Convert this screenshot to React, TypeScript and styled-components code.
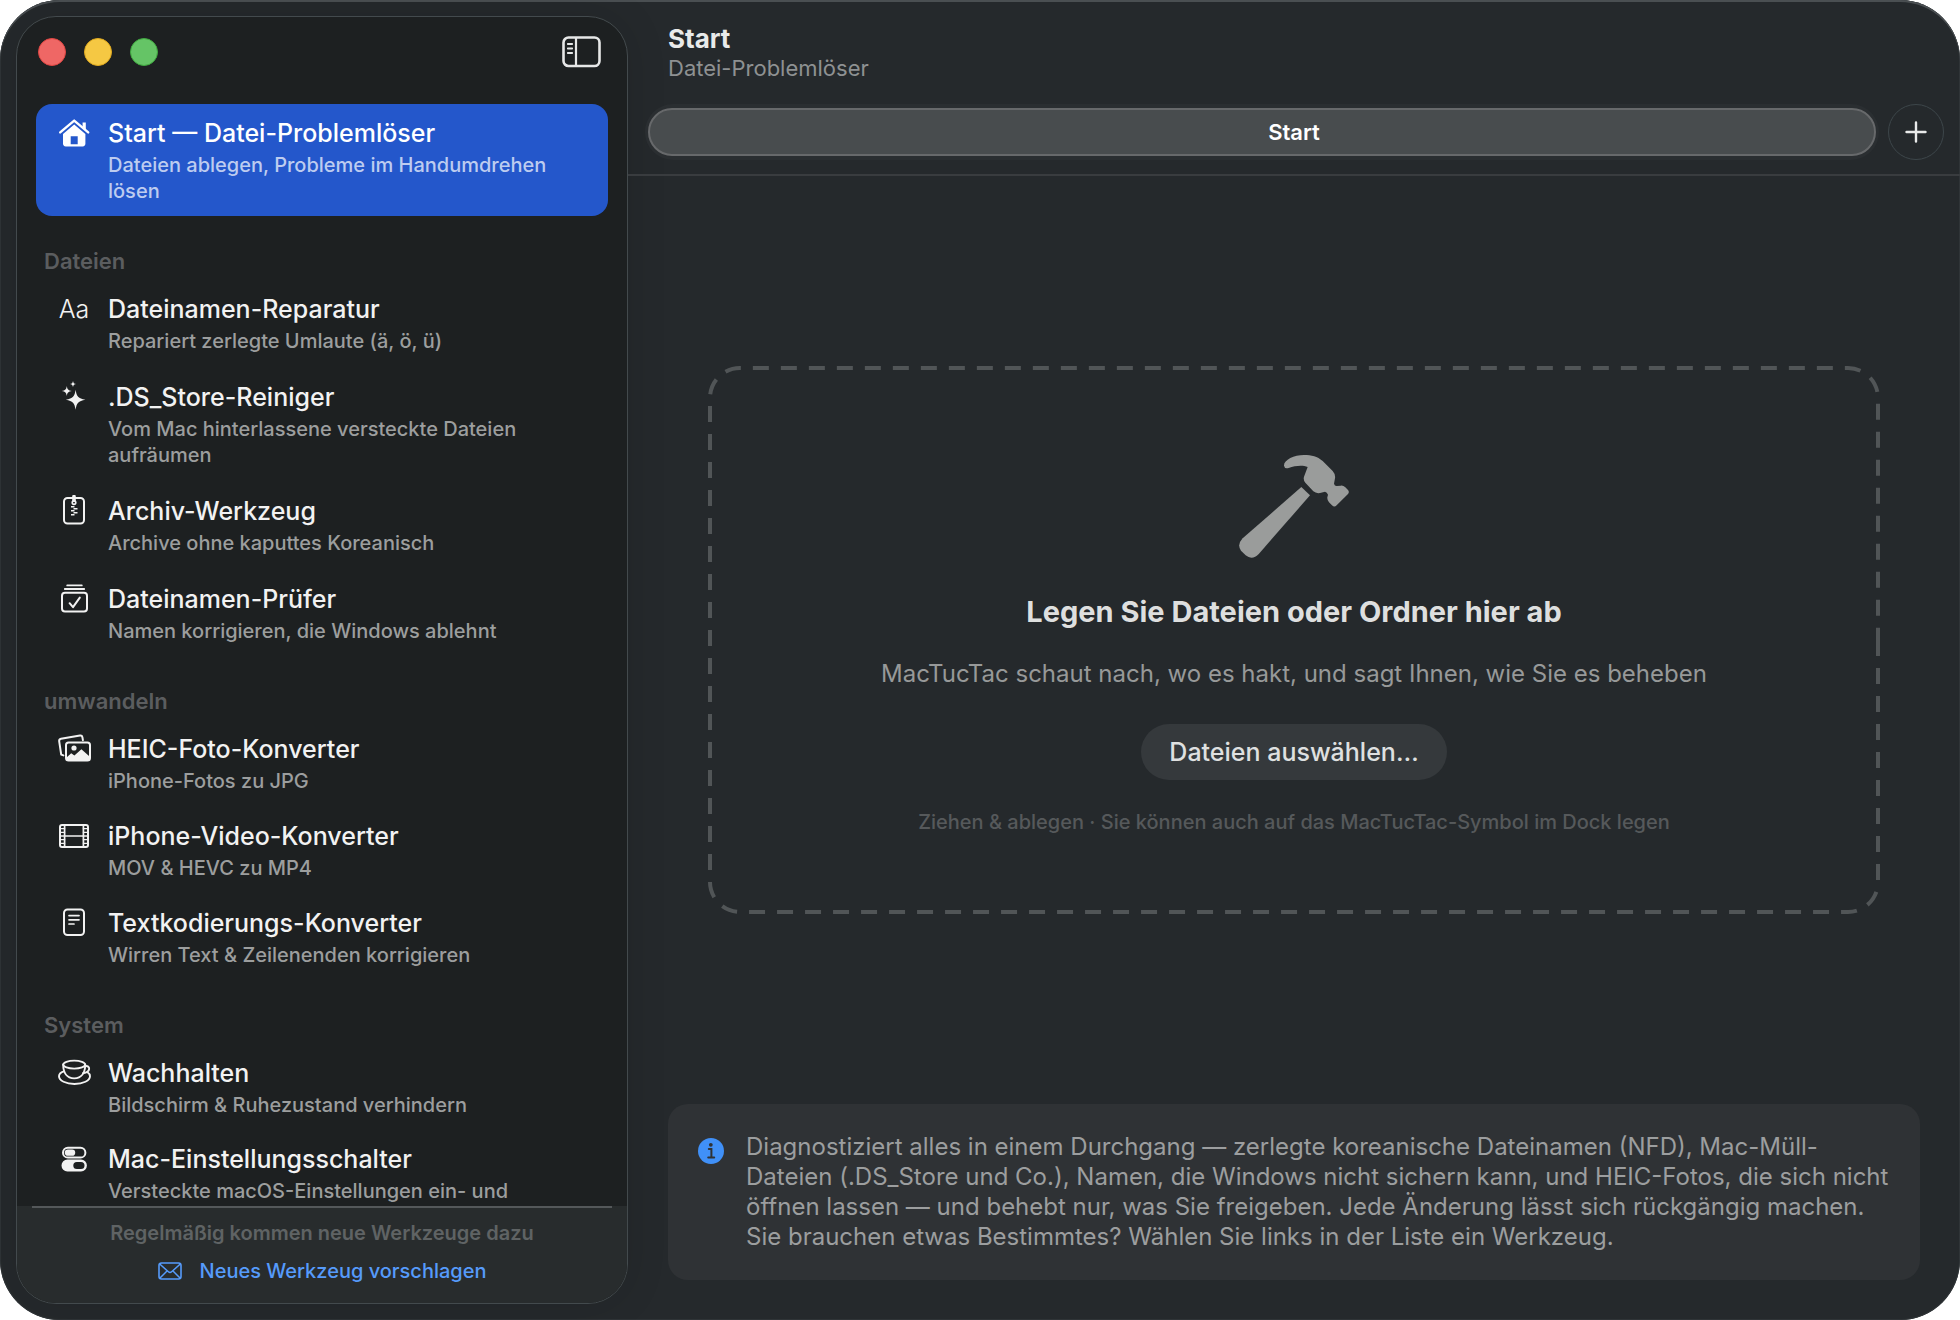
import React, { useLayoutEffect, useRef, useState } from "react";
import styled, { createGlobalStyle } from "styled-components";

const GlobalStyle = createGlobalStyle`
  *, *::before, *::after { box-sizing: border-box; }
  body {
    margin: 0;
    background: #ffffff;
    font-family: Inter, "Liberation Sans", sans-serif;
    -webkit-font-smoothing: antialiased;
  }
  button { font: inherit; color: inherit; background: none; border: 0; padding: 0; cursor: default; }
  h1, h2, p, ul { margin: 0; padding: 0; }
`;

const Window = styled.div`
  display: flex;
  height: 100vh;
  padding: 16px 0 16px 16px;
  border-radius: 60px;
  background: #25292c;
  box-shadow: inset 0 2px 0 #4a4f52, inset 0 0 0 1px #2f3437;
  overflow: hidden;
`;

const Sidebar = styled.aside`
  flex: 0 0 612px;
  display: flex;
  flex-direction: column;
  border: 1px solid #434a4d;
  border-radius: 40px;
  background: #1d2021;
  box-shadow: 0 0 40px rgba(0, 0, 0, 0.12);
  overflow: hidden;
`;

const SidebarTop = styled.div`
  flex: none;
  display: flex;
  align-items: center;
  height: 87px;
  padding: 0 25px 17px 21px;
`;

const Lights = styled.div`
  display: flex;
  gap: 18px;
  flex: 1;
`;

const Light = styled.button<{ $fill: string; $edge: string }>`
  width: 28px;
  height: 28px;
  border-radius: 50%;
  background: ${(p) => p.$fill};
  border: 1px solid ${(p) => p.$edge};
`;

const IconButton = styled.button`
  display: grid;
  place-items: center;
`;

const Nav = styled.nav`
  flex: 1;
  min-height: 0;
  overflow-y: auto;
  scrollbar-width: none;
  padding: 0 19px;
`;

const SectionTitle = styled.h2`
  padding: 31px 8px 5px;
  font-size: 22px;
  line-height: 28px;
  font-weight: 600;
  color: #5b5d5f;
`;

const List = styled.ul<{ $gap: number }>`
  display: flex;
  flex-direction: column;
  gap: ${(p) => p.$gap}px;
  list-style: none;
`;

const Row = styled.button<{ $active: boolean }>`
  display: grid;
  grid-template-columns: 40px 1fr;
  gap: 3px 14px;
  align-items: center;
  width: 100%;
  padding: 13px 18px 12px;
  border-radius: 16px;
  text-align: left;
  color: ${(p) => (p.$active ? "#ffffff" : "#f2f2f2")};
  background: ${(p) => (p.$active ? "#2457cb" : "transparent")};
`;

const IconCell = styled.span`
  display: grid;
  place-items: center;
  height: 32px;
  font-size: 25px;
  line-height: 32px;
  font-weight: 300;
`;

const RowTitle = styled.span`
  font-size: 25px;
  line-height: 32px;
  font-weight: 500;
`;

const RowText = styled.span<{ $active: boolean }>`
  grid-column: 2;
  font-size: 20px;
  line-height: 26px;
  font-weight: 500;
  color: ${(p) => (p.$active ? "#bdccf0" : "#9c9e9e")};
`;

const SidebarFoot = styled.footer`
  flex: none;
  display: flex;
  flex-direction: column;
  align-items: center;
  height: 97px;
  padding: 0 15px;
  background: #282c2d;
`;

const Rule = styled.hr`
  align-self: stretch;
  height: 2px;
  margin: 0 0 11px;
  border: 0;
  background: #54585a;
`;

const FootNote = styled.p`
  font-size: 20px;
  line-height: 28px;
  font-weight: 600;
  color: #5f6364;
`;

const FootLink = styled.a`
  display: flex;
  align-items: center;
  gap: 18px;
  margin-top: 10px;
  font-size: 20px;
  line-height: 28px;
  font-weight: 500;
  color: #569bfb;
  text-decoration: none;
`;

const Main = styled.main`
  flex: 1;
  min-width: 0;
  display: flex;
  flex-direction: column;
`;

const TitleBar = styled.header`
  padding: 7px 40px 22px;
`;

const Title = styled.h1`
  font-size: 26px;
  line-height: 32px;
  font-weight: 700;
  color: #e9eaea;
`;

const Subtitle = styled.p`
  font-size: 22px;
  line-height: 26px;
  color: #8e9192;
`;

const TabStrip = styled.div`
  display: flex;
  gap: 9px;
  padding: 1px 16px 14px;
  border-bottom: 2px solid #393c3f;
`;

const TabTrack = styled.div`
  flex: 1;
  display: flex;
  margin-left: 1px;
  padding: 4px 3px;
  border-radius: 28px;
  background: #2a2e31;
`;

const Tab = styled.button`
  flex: 1;
  height: 48px;
  padding-left: 64px;
  border: 2px solid #67696b;
  border-radius: 24px;
  background: #484c4e;
  font-size: 22px;
  line-height: 28px;
  font-weight: 600;
  color: #ffffff;
`;

const AddTab = styled.button`
  display: grid;
  place-items: center;
  width: 56px;
  height: 56px;
  border: 1px solid #3d464a;
  border-radius: 50%;
`;

const Stage = styled.section`
  flex: 1;
  display: flex;
  align-items: center;
  padding: 0 80px;
`;

const DropZone = styled.div`
  position: relative;
  flex: 1;
  display: flex;
  flex-direction: column;
  align-items: center;
  gap: 28px;
  padding: 88px 32px 78px;
  text-align: center;
`;

const DashSvg = styled.svg`
  position: absolute;
  inset: 0;
  width: 100%;
  height: 100%;
  pointer-events: none;
`;

const DropTitle = styled.h2`
  font-size: 29px;
  line-height: 36px;
  font-weight: 700;
  color: #dedfdf;
`;

const DropText = styled.p`
  padding-bottom: 6px;
  font-size: 24px;
  line-height: 32px;
  color: #979999;
`;

const PickButton = styled.button`
  height: 56px;
  padding: 0 28px;
  border-radius: 28px;
  background: #35393c;
  font-size: 25px;
  line-height: 32px;
  font-weight: 500;
  color: #dfe0e0;
`;

const Hint = styled.p`
  font-size: 20px;
  line-height: 28px;
  font-weight: 500;
  color: #56595b;
`;

const InfoBox = styled.section`
  display: flex;
  gap: 22px;
  margin: 0 40px 24px;
  padding: 28px 24px 28px 30px;
  border-radius: 20px;
  background: #2f3235;
`;

const InfoIcon = styled.svg`
  flex: none;
  margin-top: 6px;
`;

const InfoText = styled.p`
  font-size: 24px;
  line-height: 30px;
  color: #9c9e9f;
`;

const stroke = {
  fill: "none",
  stroke: "currentColor",
  strokeWidth: 2,
  strokeLinecap: "round" as const,
  strokeLinejoin: "round" as const,
};

function Glyph({ children }: { children: React.ReactNode }) {
  return (
    <svg width="40" height="32" viewBox="0 0 40 32" aria-hidden="true">
      {children}
    </svg>
  );
}

const HouseIcon = () => (
  <Glyph>
    <path d="M6.2 15.4 20.2 3.6l14 11.8" {...stroke} strokeWidth={2.4} />
    <path d="M28.6 5.4h3.2v7.2l-3.2-2.7z" fill="currentColor" />
    <path
      fillRule="evenodd"
      fill="currentColor"
      d="M20.2 7.4 31.4 17v9.6q0 2.8-2.8 2.8H11.8Q9 29.400 9 26.600V17zM16.700 19.200v8h7v-8z"
    />
  </Glyph>
);

const SparkleIcon = () => (
  <Glyph>
    <g fill="currentColor">
      <path d="M21.600 8.800c1 6.600 2.600 8.600 9.800 10-7.200 1.400-8.800 3.400-9.800 10-1-6.600-2.600-8.600-9.800-10 7.200-1.400 8.800-3.400 9.800-10z" />
      <path d="M12.800 5c.6 3.400 1.400 4.400 5 5-3.600.6-4.400 1.600-5 5-.6-3.400-1.400-4.400-5-5 3.600-.6 4.400-1.600 5-5z" />
      <path d="M19 0c.4 2 .9 2.700 3.200 3.100C19.900 3.500 19.400 4.200 19 6.200c-.4-2-.9-2.700-3.200-3.100C18.100 2.700 18.600 2 19 0z" />
    </g>
  </Glyph>
);

const ZipIcon = () => (
  <Glyph>
    <rect x="10" y="3" width="20" height="25.500" rx="3.500" {...stroke} />
    <circle cx="20" cy="7.600" r="1.800" {...stroke} strokeWidth={1.600} />
    <path d="M20 1.500v4" {...stroke} strokeWidth={3.600} />
    <path
      d="M17 11.800h3.500M19.500 13.800h4M17 15.800h3.500M19.500 17.800h4M17 19.800h3.500"
      {...stroke}
      strokeLinecap="butt"
      strokeWidth={1.600}
    />
  </Glyph>
);

const CheckStackIcon = () => (
  <Glyph>
    <rect x="8" y="9.800" width="25" height="18.700" rx="3" {...stroke} />
    <path d="M10.800 6h19.400M13.200 2.400h14.600" {...stroke} strokeWidth={1.800} />
    <path d="m15.600 20.200 3.400 4 6.800-9.600" {...stroke} />
  </Glyph>
);

const PhotosIcon = () => (
  <Glyph>
    <path d="M9.400 22.400 7.200 21.600 5.200 8.400q-.3-2.200 1.800-2.600L26 2.600q2-.3 2.400 1.600l.5 3" {...stroke} />
    <rect x="12" y="9.400" width="24" height="18.200" rx="2.600" {...stroke} />
    <circle cx="20" cy="15" r="2.600" fill="currentColor" />
    <path d="m12.500 24.500 4.700-4.300 3.200 2.400 7-6.400 8.200 7.300V26q0 1.600-1.600 1.600H14q-1.500 0-1.500-1.600z" fill="currentColor" />
  </Glyph>
);

const FilmIcon = () => (
  <Glyph>
    <rect x="6" y="5" width="28" height="22" rx="2" {...stroke} />
    <path d="M10.600 5v22M29.400 5v22M10.600 16h18.800" {...stroke} strokeWidth={1.700} />
    <path
      d="M6 8.700h4.600M6 12.300h4.600M6 16h4.600M6 19.700h4.600M6 23.300h4.600M29.400 8.700H34M29.400 12.300H34M29.400 16H34M29.400 19.700H34M29.400 23.300H34"
      {...stroke}
      strokeWidth={1.300}
    />
  </Glyph>
);

const DocIcon = () => (
  <Glyph>
    <rect x="10" y="2.500" width="20" height="25.500" rx="3.500" {...stroke} />
    <path d="M15 8.600h10M15 12.800h10M15 17h5" {...stroke} strokeWidth={1.700} />
  </Glyph>
);

const CupIcon = () => (
  <Glyph>
    <ellipse cx="20.200" cy="7.600" rx="11" ry="4" {...stroke} strokeWidth={1.900} />
    <path d="M9.200 7.600c0 8 3.600 13.800 11 13.800s11-5.800 11-13.800" {...stroke} strokeWidth={1.900} />
    <path d="M30.800 9.200c6-1.400 6.200 6.400-1.800 7" {...stroke} strokeWidth={1.900} />
    <path d="M9.800 14.400C6.800 15.400 5 17 5 19.200c0 4.400 7 7.800 15.500 7.800S36 23.600 36 19.200c0-1.600-.9-3-2.500-4" {...stroke} strokeWidth={1.900} />
  </Glyph>
);

const SwitchesIcon = () => (
  <Glyph>
    <rect x="9" y="4.800" width="22.400" height="9.800" rx="4.900" {...stroke} />
    <rect x="10.800" y="6.600" width="10.400" height="6.200" rx="3.100" fill="currentColor" />
    <path
      fillRule="evenodd"
      fill="currentColor"
      d="M13.400 16.600h13.600a5.600 5.600 0 0 1 0 11.800H13.400a5.600 5.600 0 0 1 0-11.800zM22.800 19a3.500 3.500 0 0 0 0 7h4.200a3.500 3.500 0 0 0 0-7z"
    />
  </Glyph>
);

const SidebarIcon = () => (
  <svg width="40" height="32" viewBox="0 0 40 32" aria-hidden="true" color="#e6e7e7">
    <rect x="1.500" y="1.500" width="36" height="28.500" rx="5" {...stroke} strokeWidth={2.600} />
    <path d="M14 2v27" {...stroke} strokeWidth={2.200} />
    <path d="M5.800 8h4.400M5.800 12.500h4.400M5.800 17h4.400" {...stroke} strokeWidth={1.800} />
  </svg>
);

const MailIcon = () => (
  <svg width="24" height="18" viewBox="0 0 24 18" aria-hidden="true">
    <rect x="1" y="1" width="22" height="16" rx="2.500" {...stroke} strokeWidth={1.600} />
    <path d="m2 2.200 8.400 7.600q1.600 1.400 3.200 0L22 2.200M2 16l7-7M22 16l-7-7" {...stroke} strokeWidth={1.500} />
  </svg>
);

const HammerIcon = () => (
  <svg width="110" height="112" viewBox="297 160 330 336" fill="#9a9c9b" aria-hidden="true">
    <path d="M432 195C431 178 462 163 492 163 515 163 532 167 548 181L578 211Q587 221 585 233L582 249Q584 257 591 256L602 255Q610 254 616 260L624 268Q629 274 624 280L590 314Q583 321 576 314L567 305Q561 298 562 290L564 282Q561 274 555 273L540 277Q528 279 520 272L496 246Q489 238 492 228L503 199C488 193 466 195 446 202Q434 206 432 195Z" />
    <path d="M484 259 510 284 357 459Q337 480 317 464L303 450Q290 432 308 413Z" />
  </svg>
);

/* Dashed frame, traced clockwise from the middle of the right edge. */
function DashFrame() {
  const ref = useRef<SVGSVGElement>(null);
  const [size, setSize] = useState({ w: 0, h: 0 });

  useLayoutEffect(() => {
    const node = ref.current;
    if (!node) return;
    const measure = () => {
      const box = node.getBoundingClientRect();
      setSize({ w: box.width, h: box.height });
    };
    measure();
    const observer = new ResizeObserver(measure);
    observer.observe(node);
    return () => observer.disconnect();
  }, []);

  const r = 30;
  const right = size.w - 2;
  const bottom = size.h - 2;
  const arc = (x: number, y: number) => `A${r} ${r} 0 0 1 ${x} ${y}`;
  const d = [
    `M${right} ${size.h / 2}V${bottom - r}`,
    arc(right - r, bottom),
    `H${2 + r}`,
    arc(2, bottom - r),
    `V${2 + r}`,
    arc(2 + r, 2),
    `H${right - r}`,
    arc(right, 2 + r),
    "Z",
  ].join("");

  return (
    <DashSvg ref={ref} aria-hidden="true">
      {size.w > 0 && <path d={d} fill="none" stroke="#515557" strokeWidth="4" strokeDasharray="16 12" />}
    </DashSvg>
  );
}

type Tool = { title: string; text: string; icon: React.ReactNode };

const home: Tool = {
  title: "Start — Datei-Problemlöser",
  text: "Dateien ablegen, Probleme im Handumdrehen lösen",
  icon: <HouseIcon />,
};

const sections: { name: string; gap: number; tools: Tool[] }[] = [
  {
    name: "Dateien",
    gap: 2,
    tools: [
      { title: "Dateinamen-Reparatur", text: "Repariert zerlegte Umlaute (ä, ö, ü)", icon: "Aa" },
      { title: ".DS_Store-Reiniger", text: "Vom Mac hinterlassene versteckte Dateien aufräumen", icon: <SparkleIcon /> },
      { title: "Archiv-Werkzeug", text: "Archive ohne kaputtes Koreanisch", icon: <ZipIcon /> },
      { title: "Dateinamen-Prüfer", text: "Namen korrigieren, die Windows ablehnt", icon: <CheckStackIcon /> },
    ],
  },
  {
    name: "umwandeln",
    gap: 1,
    tools: [
      { title: "HEIC-Foto-Konverter", text: "iPhone-Fotos zu JPG", icon: <PhotosIcon /> },
      { title: "iPhone-Video-Konverter", text: "MOV & HEVC zu MP4", icon: <FilmIcon /> },
      { title: "Textkodierungs-Konverter", text: "Wirren Text & Zeilenenden korrigieren", icon: <DocIcon /> },
    ],
  },
  {
    name: "System",
    gap: 0,
    tools: [
      { title: "Wachhalten", text: "Bildschirm & Ruhezustand verhindern", icon: <CupIcon /> },
      { title: "Mac-Einstellungsschalter", text: "Versteckte macOS-Einstellungen ein- und", icon: <SwitchesIcon /> },
    ],
  },
];

function ToolRow({ tool, active, onPick }: { tool: Tool; active: boolean; onPick: () => void }) {
  return (
    <Row type="button" $active={active} aria-current={active ? "page" : undefined} onClick={onPick}>
      <IconCell>{tool.icon}</IconCell>
      <RowTitle>{tool.title}</RowTitle>
      <RowText $active={active}>{tool.text}</RowText>
    </Row>
  );
}

export default function App() {
  const [current, setCurrent] = useState(home.title);
  return (
    <>
      <GlobalStyle />
      <Window>
        <Sidebar>
          <SidebarTop>
            <Lights>
              <Light type="button" aria-label="Schließen" $fill="#ef6765" $edge="#e04643" />
              <Light type="button" aria-label="Minimieren" $fill="#f5c843" $edge="#dfa91f" />
              <Light type="button" aria-label="Vergrößern" $fill="#65c466" $edge="#3fa83f" />
            </Lights>
            <IconButton type="button" aria-label="Seitenleiste">
              <SidebarIcon />
            </IconButton>
          </SidebarTop>
          <Nav>
            <ToolRow tool={home} active={current === home.title} onPick={() => setCurrent(home.title)} />
            {sections.map((section) => (
              <section key={section.name}>
                <SectionTitle>{section.name}</SectionTitle>
                <List $gap={section.gap}>
                  {section.tools.map((tool) => (
                    <li key={tool.title}>
                      <ToolRow tool={tool} active={current === tool.title} onPick={() => setCurrent(tool.title)} />
                    </li>
                  ))}
                </List>
              </section>
            ))}
          </Nav>
          <SidebarFoot>
            <Rule />
            <FootNote>Regelmäßig kommen neue Werkzeuge dazu</FootNote>
            <FootLink href="#vorschlag">
              <MailIcon />
              Neues Werkzeug vorschlagen
            </FootLink>
          </SidebarFoot>
        </Sidebar>
        <Main>
          <TitleBar>
            <Title>Start</Title>
            <Subtitle>Datei-Problemlöser</Subtitle>
          </TitleBar>
          <TabStrip>
            <TabTrack role="tablist">
              <Tab type="button" role="tab" aria-selected="true">
                Start
              </Tab>
            </TabTrack>
            <AddTab type="button" aria-label="Neuer Tab">
              <svg width="24" height="24" viewBox="0 0 24 24" color="#e9eaea" aria-hidden="true">
                <path d="M12 2.500v19M2.500 12h19" {...stroke} strokeWidth={2.400} />
              </svg>
            </AddTab>
          </TabStrip>
          <Stage>
            <DropZone>
              <DashFrame />
              <HammerIcon />
              <DropTitle>Legen Sie Dateien oder Ordner hier ab</DropTitle>
              <DropText>MacTucTac schaut nach, wo es hakt, und sagt Ihnen, wie Sie es beheben</DropText>
              <PickButton type="button">Dateien auswählen…</PickButton>
              <Hint>Ziehen &amp; ablegen · Sie können auch auf das MacTucTac-Symbol im Dock legen</Hint>
            </DropZone>
          </Stage>
          <InfoBox>
            <InfoIcon width="26" height="26" viewBox="0 0 26 26" aria-hidden="true">
              <circle cx="13" cy="13" r="13" fill="#4090f7" />
              <circle cx="12.800" cy="6.800" r="1.900" fill="#2f3235" />
              <path d="M10.800 11h2.600v8.400M10.200 19.600h6" fill="none" stroke="#2f3235" strokeWidth="2" strokeLinecap="round" />
            </InfoIcon>
            <InfoText>
              Diagnostiziert alles in einem Durchgang — zerlegte koreanische Dateinamen (NFD), Mac-Müll-Dateien (.DS_Store
              und Co.), Namen, die Windows nicht sichern kann, und HEIC-Fotos, die sich nicht öffnen lassen — und behebt
              nur, was Sie freigeben. Jede Änderung lässt sich rückgängig machen. Sie brauchen etwas Bestimmtes? Wählen Sie
              links in der Liste ein Werkzeug.
            </InfoText>
          </InfoBox>
        </Main>
      </Window>
    </>
  );
}
